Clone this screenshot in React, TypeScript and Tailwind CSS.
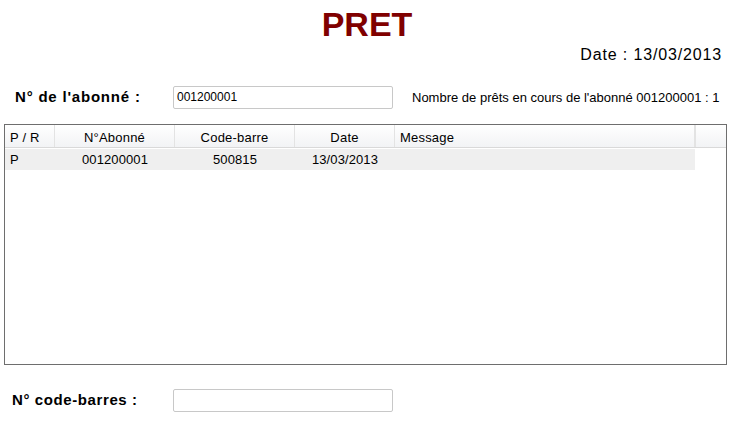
import React from "react";

const cols = [
  { w: "w-[50px]", label: "P / R", align: "text-left pl-[5px]" },
  { w: "w-[120px]", label: "N°Abonné", align: "text-center" },
  { w: "w-[120px]", label: "Code-barre", align: "text-center" },
  { w: "w-[100px]", label: "Date", align: "text-center" },
  { w: "w-[300px]", label: "Message", align: "text-left pl-[5px]" },
];

const row = ["P", "001200001", "500815", "13/03/2013", ""];

export default function App() {
  return (
    <div
      className="w-[732px] h-[422px] bg-white text-black overflow-hidden relative"
      style={{ fontFamily: '"Liberation Sans", Arial, sans-serif' }}
    >
      <div className="flex justify-center pt-[6px] h-[42px]">
        <h1 className="text-[34px] leading-[36px] font-bold text-[#800000] pl-[2px]">PRET</h1>
      </div>
      <div className="flex justify-end pr-[10px] h-[26px]">
        <span className="text-[16px] leading-[26px] tracking-[0.85px]">Date : 13/03/2013</span>
      </div>
      <div className="flex items-center h-[24px] mt-[17px]">
        <span className="w-[173px] pl-[15px] text-[15px] font-bold tracking-[0.8px]">N° de l'abonné :</span>
        <div className="w-[220px] h-[23px] border border-[#c8c8c8] rounded-[2px] flex items-center px-[3px] text-[12px]">
          001200001
        </div>
        <span className="ml-[19px] text-[13px] mt-[1px]">Nombre de prêts en cours de l'abonné 001200001 : 1</span>
      </div>
      <div className="ml-[4px] mt-[15px] w-[723px] h-[241px] border border-[#6e6e6e] flex flex-col">
        <div className="flex h-[23px] border-b border-[#d9d9d9] bg-gradient-to-b from-white to-[#f2f3f5] text-[13px] tracking-[0.2px]">
          {cols.map((c, i) => (
            <div
              key={i}
              className={`${c.w} ${c.align} h-full leading-[23px] pt-[1px] border-r border-[#e3e3e3] whitespace-pre`}
            >
              {c.label}
            </div>
          ))}
          <div className="flex-1 border-l border-[#e3e3e3]" />
        </div>
        <div className="flex h-[21px] mt-[1px] text-[13px] tracking-[0.1px]">
          <div className="flex w-[690px] bg-[#efefef]">
            {row.map((v, i) => (
              <div key={i} className={`${cols[i].w} ${cols[i].align} leading-[21px] ${i === 4 ? "flex-1" : ""}`}>
                {v}
              </div>
            ))}
          </div>
        </div>
      </div>
      <div className="flex items-center h-[24px] mt-[23px]">
        <span className="w-[173px] pl-[12px] text-[15px] font-bold tracking-[0.6px]">N° code-barres :</span>
        <div className="w-[220px] h-[23px] border border-[#c8c8c8] rounded-[2px]" />
      </div>
    </div>
  );
}
